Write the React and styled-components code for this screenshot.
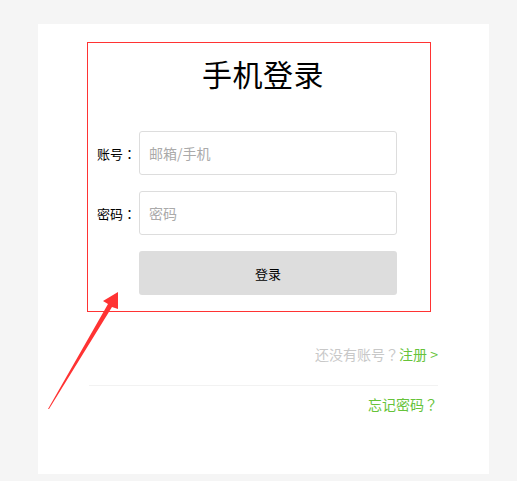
import React from "react";
import styled, { createGlobalStyle } from "styled-components";

const GlobalStyle = createGlobalStyle`
  html, body {
    margin: 0;
    padding: 0;
    background: #f5f5f5;
    font-family: "Noto Sans CJK SC", "Noto Sans", sans-serif;
    text-spacing-trim: space-all;
  }
`;

const Page = styled.div`
  position: relative;
  width: 517px;
  height: 481px;
  padding: 24px 0 0 38px;
  box-sizing: border-box;
`;

const Card = styled.div`
  width: 451px;
  height: 450px;
  background: #fff;
  padding: 18px 0 0 49px;
  box-sizing: border-box;
`;

const Highlight = styled.div`
  width: 344px;
  height: 270px;
  border: 1px solid #f33;
  box-sizing: border-box;
  padding: 12px 0 0 8px;
`;

const Title = styled.h1`
  margin: 0 0 40px;
  font-size: 30px;
  line-height: 36px;
  font-weight: normal;
  text-align: center;
  color: #000;
  letter-spacing: 0.5px;
`;

const Form = styled.form`
  display: flex;
  flex-direction: column;
  gap: 16px;
`;

const Row = styled.div`
  display: flex;
  align-items: center;
`;

const Label = styled.label`
  width: 43px;
  padding-left: 1px;
  box-sizing: border-box;
  font-family: "Noto Sans CJK TC", "Noto Sans CJK SC", sans-serif;
  font-size: 13px;
  color: #000;
  white-space: nowrap;
`;

const Input = styled.input`
  width: 258px;
  height: 44px;
  box-sizing: border-box;
  border: 1px solid #ddd;
  border-radius: 3px;
  padding: 0 9px;
  font-size: 14px;
  font-family: inherit;
  outline: none;
  &::placeholder {
    color: #aaa;
  }
`;

const Submit = styled.button`
  margin-left: 43px;
  width: 258px;
  height: 44px;
  border: none;
  border-radius: 3px;
  background: #ddd;
  font-size: 13px;
  font-family: inherit;
  color: #000;
`;

const Footer = styled.div`
  width: 349px;
  margin: 32px 0 0 2px;
  text-align: right;
  font-family: "Noto Sans CJK TC", "Noto Sans CJK SC", sans-serif;
  font-size: 14px;
`;

const Line = styled.div`
  line-height: 20px;
  padding: ${(p) => (p.$top ? "0 0 21px 0" : "8px 0 0 0")};
  border-bottom: ${(p) => (p.$top ? "1px solid #f2f2f2" : "none")};
  color: ${(p) => (p.$muted ? "#c8c8c8" : "#66c33a")};
`;

const Link = styled.a`
  color: #66c33a;
  text-decoration: none;
`;

const Arrow = styled.svg`
  position: absolute;
  left: 0;
  top: 0;
  pointer-events: none;
`;

const App = () => {
  return (
    <Page>
      <GlobalStyle />
      <Card>
        <Highlight>
          <Title>手机登录</Title>
          <Form onSubmit={(e) => e.preventDefault()}>
            <Row>
              <Label>账号：</Label>
              <Input type="text" placeholder="邮箱/手机" />
            </Row>
            <Row>
              <Label>密码：</Label>
              <Input type="password" placeholder="密码" />
            </Row>
            <Submit type="submit">登录</Submit>
          </Form>
        </Highlight>
        <Footer>
          <Line $top $muted>
            还没有账号？<Link href="#">注册 &gt;</Link>
          </Line>
          <Line>忘记密码？</Line>
        </Footer>
      </Card>
      <Arrow width="517" height="481" viewBox="0 0 517 481">
        <polygon
          points="118,292 103,301 108,304 48,409 49,409 112,307 118,309"
          fill="#f33"
        />
      </Arrow>
    </Page>
  );
};

export default App;
